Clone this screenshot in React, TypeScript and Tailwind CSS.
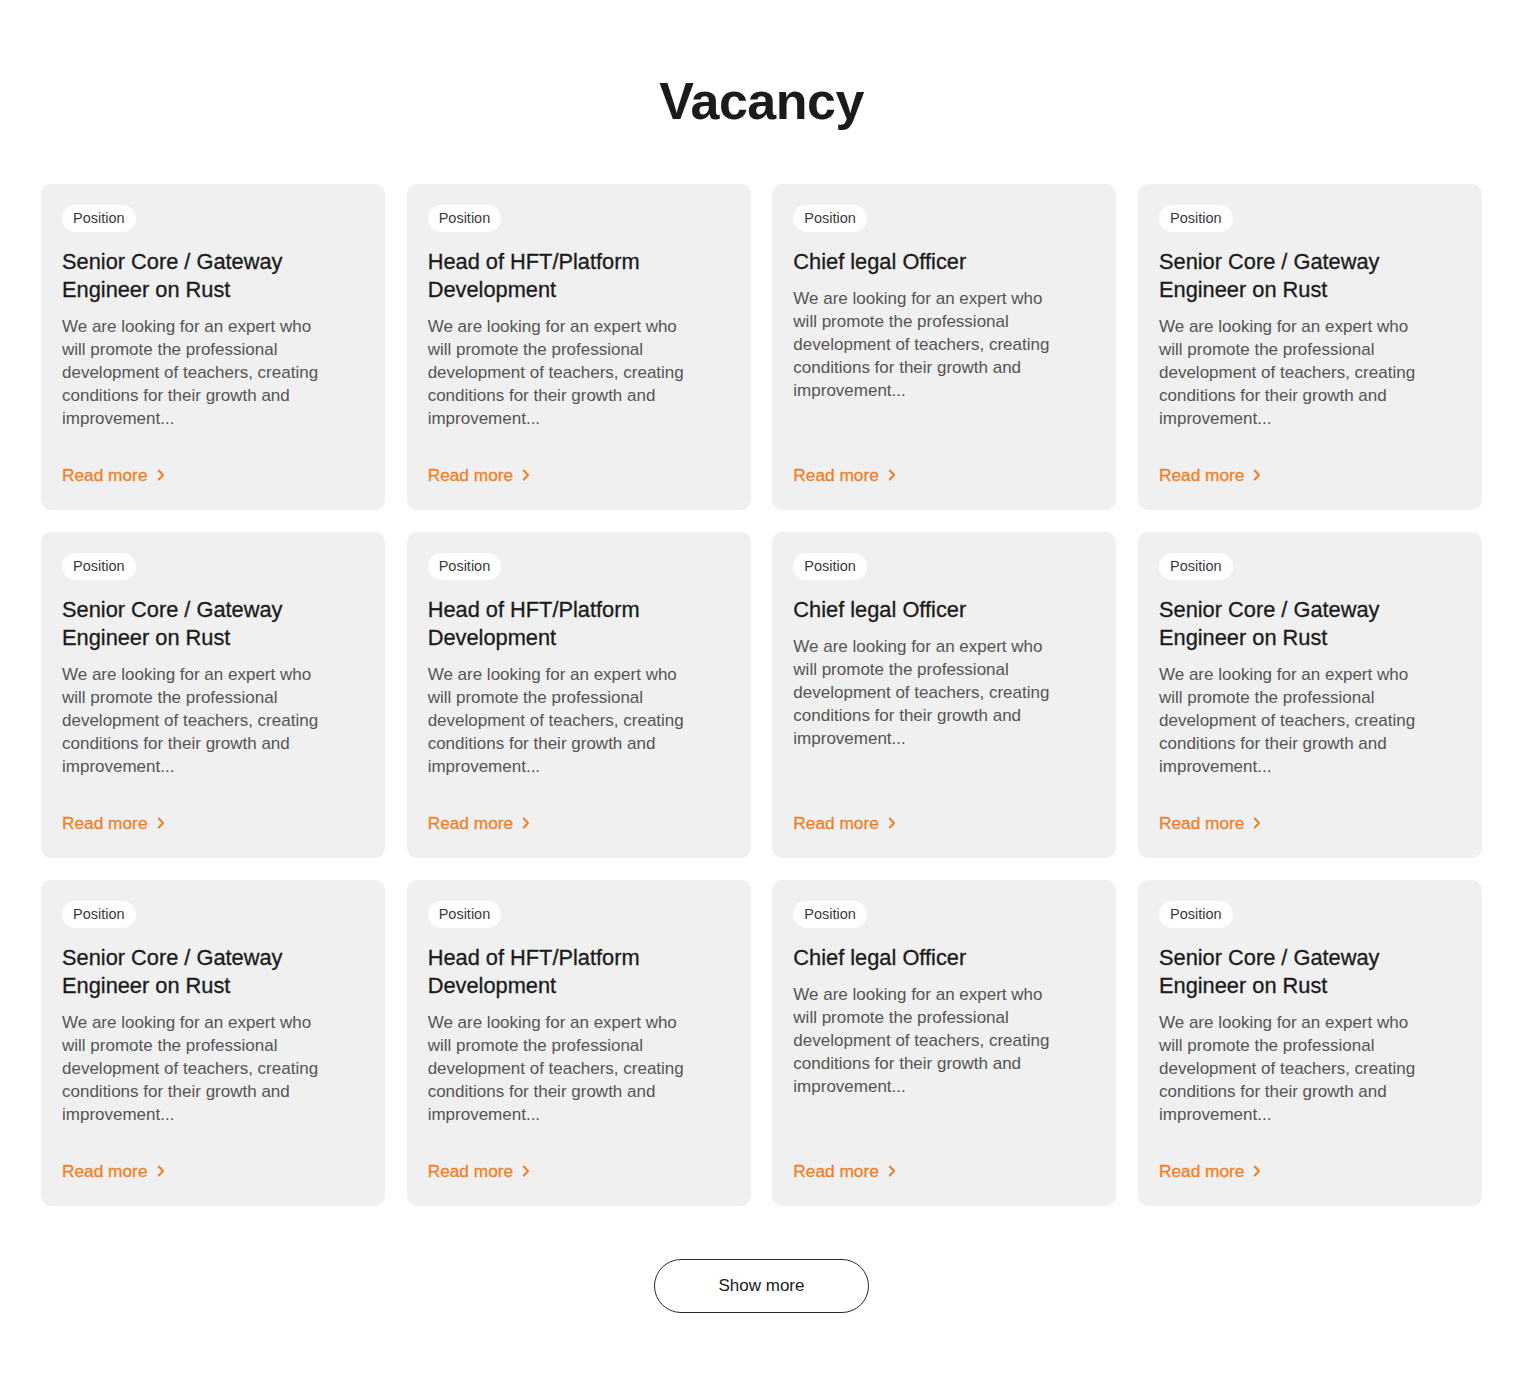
import React from "react";

type Job = { title: string };

const jobs: Job[] = [
  { title: "Senior Core / Gateway Engineer on Rust" },
  { title: "Head of HFT/Platform Development" },
  { title: "Chief legal Officer" },
  { title: "Senior Core / Gateway Engineer on Rust" },
];

const all = [...jobs, ...jobs, ...jobs];

function Chevron() {
  return (
    <svg width="8" height="12" viewBox="0 0 8 12" fill="none" className="ml-[9px]">
      <path d="M1.8 1.5L6 6L1.8 10.5" stroke="#f07f26" strokeWidth="2" strokeLinecap="round" strokeLinejoin="round" />
    </svg>
  );
}

function Card({ title }: Job) {
  return (
    <div className="flex h-[326px] flex-col rounded-[10px] bg-[#f0f0f0] px-[21px] pb-[24px] pt-[21px]">
      <div className="self-start rounded-full bg-white px-[11px] h-[27px] flex items-center text-[14.5px] text-[#3a3a3a]">
        Position
      </div>
      <h3 className="mt-[16px] max-w-[280px] text-[21.8px] leading-[28px] font-medium text-[#1b1b1b] [-webkit-text-stroke:0.3px_#1b1b1b]">
        {title}
      </h3>
      <p className="mt-[11px] max-w-[270px] text-[17px] leading-[23px] text-[#555555]">
        We are looking for an expert who will promote the professional development of teachers, creating conditions for
        their growth and improvement...
      </p>
      <a
        className="mt-auto flex items-center text-[17.3px] leading-[22px] font-medium text-[#f07f26] [-webkit-text-stroke:0.3px_#f07f26]"
        href="#"
      >
        Read more
        <Chevron />
      </a>
    </div>
  );
}

export default function App() {
  return (
    <div className="min-h-[1373px] bg-white font-['Liberation_Sans',Arial,sans-serif]">
      <div className="mx-auto w-[1522px] pl-[41px] pr-[40px] pt-[70px] pb-[60px]">
        <h1 className="text-center text-[52px] leading-[62px] font-bold tracking-[-0.5px] text-[#1b1b1b]">Vacancy</h1>
        <div className="mt-[52px] grid grid-cols-4 gap-x-[21.67px] gap-y-[22px]">
          {all.map((j, i) => (
            <Card key={i} title={j.title} />
          ))}
        </div>
        <div className="mt-[53px] flex justify-center">
          <button className="h-[54px] w-[215px] rounded-full border border-[#2a2a2a] bg-white text-[17px] text-[#1b1b1b]">
            Show more
          </button>
        </div>
      </div>
    </div>
  );
}
